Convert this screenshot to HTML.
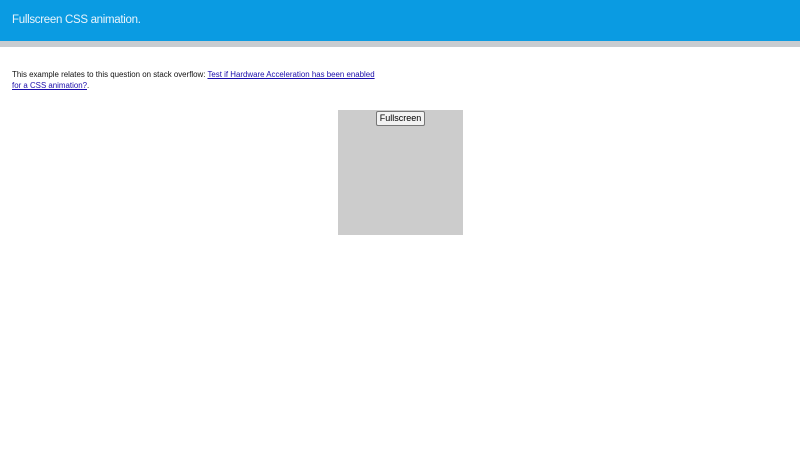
<!DOCTYPE html>
<html><head><style>
body{margin:0;width:800px;height:450px;background:#fff;font-family:"Liberation Sans",sans-serif;position:relative;overflow:hidden}
.hdr{position:absolute;left:0;top:0;width:800px;height:41px;background:#0a9be2}
.hdr span{position:absolute;left:12px;top:14px;color:#e8f4fc;font-size:11.5px;letter-spacing:-0.3px}
.bar{position:absolute;left:0;top:41px;width:800px;height:6px;background:#c8ccd0}
.p{position:absolute;left:12px;top:69px;font-size:7.9px;line-height:11px;color:#111;width:500px;white-space:nowrap}
.p a{color:#1a0dab;text-decoration:underline}
.box{position:absolute;left:338px;top:110px;width:125px;height:125px;background:#cccccc}
.btn{position:absolute;left:376px;top:111px;width:47px;height:13px;border:1px solid #777;background:#f2f2f2;border-radius:2px;font-size:9px;line-height:13px;text-align:center;color:#000}
</style></head><body>
<div class="hdr"><span>Fullscreen CSS animation.</span></div>
<div class="bar"></div>
<div class="p">This example relates to this question on stack overflow: <a>Test if Hardware Acceleration has been enabled</a><br><a>for a CSS animation?</a>.</div>
<div class="box"></div>
<div class="btn">Fullscreen</div>
</body></html>
